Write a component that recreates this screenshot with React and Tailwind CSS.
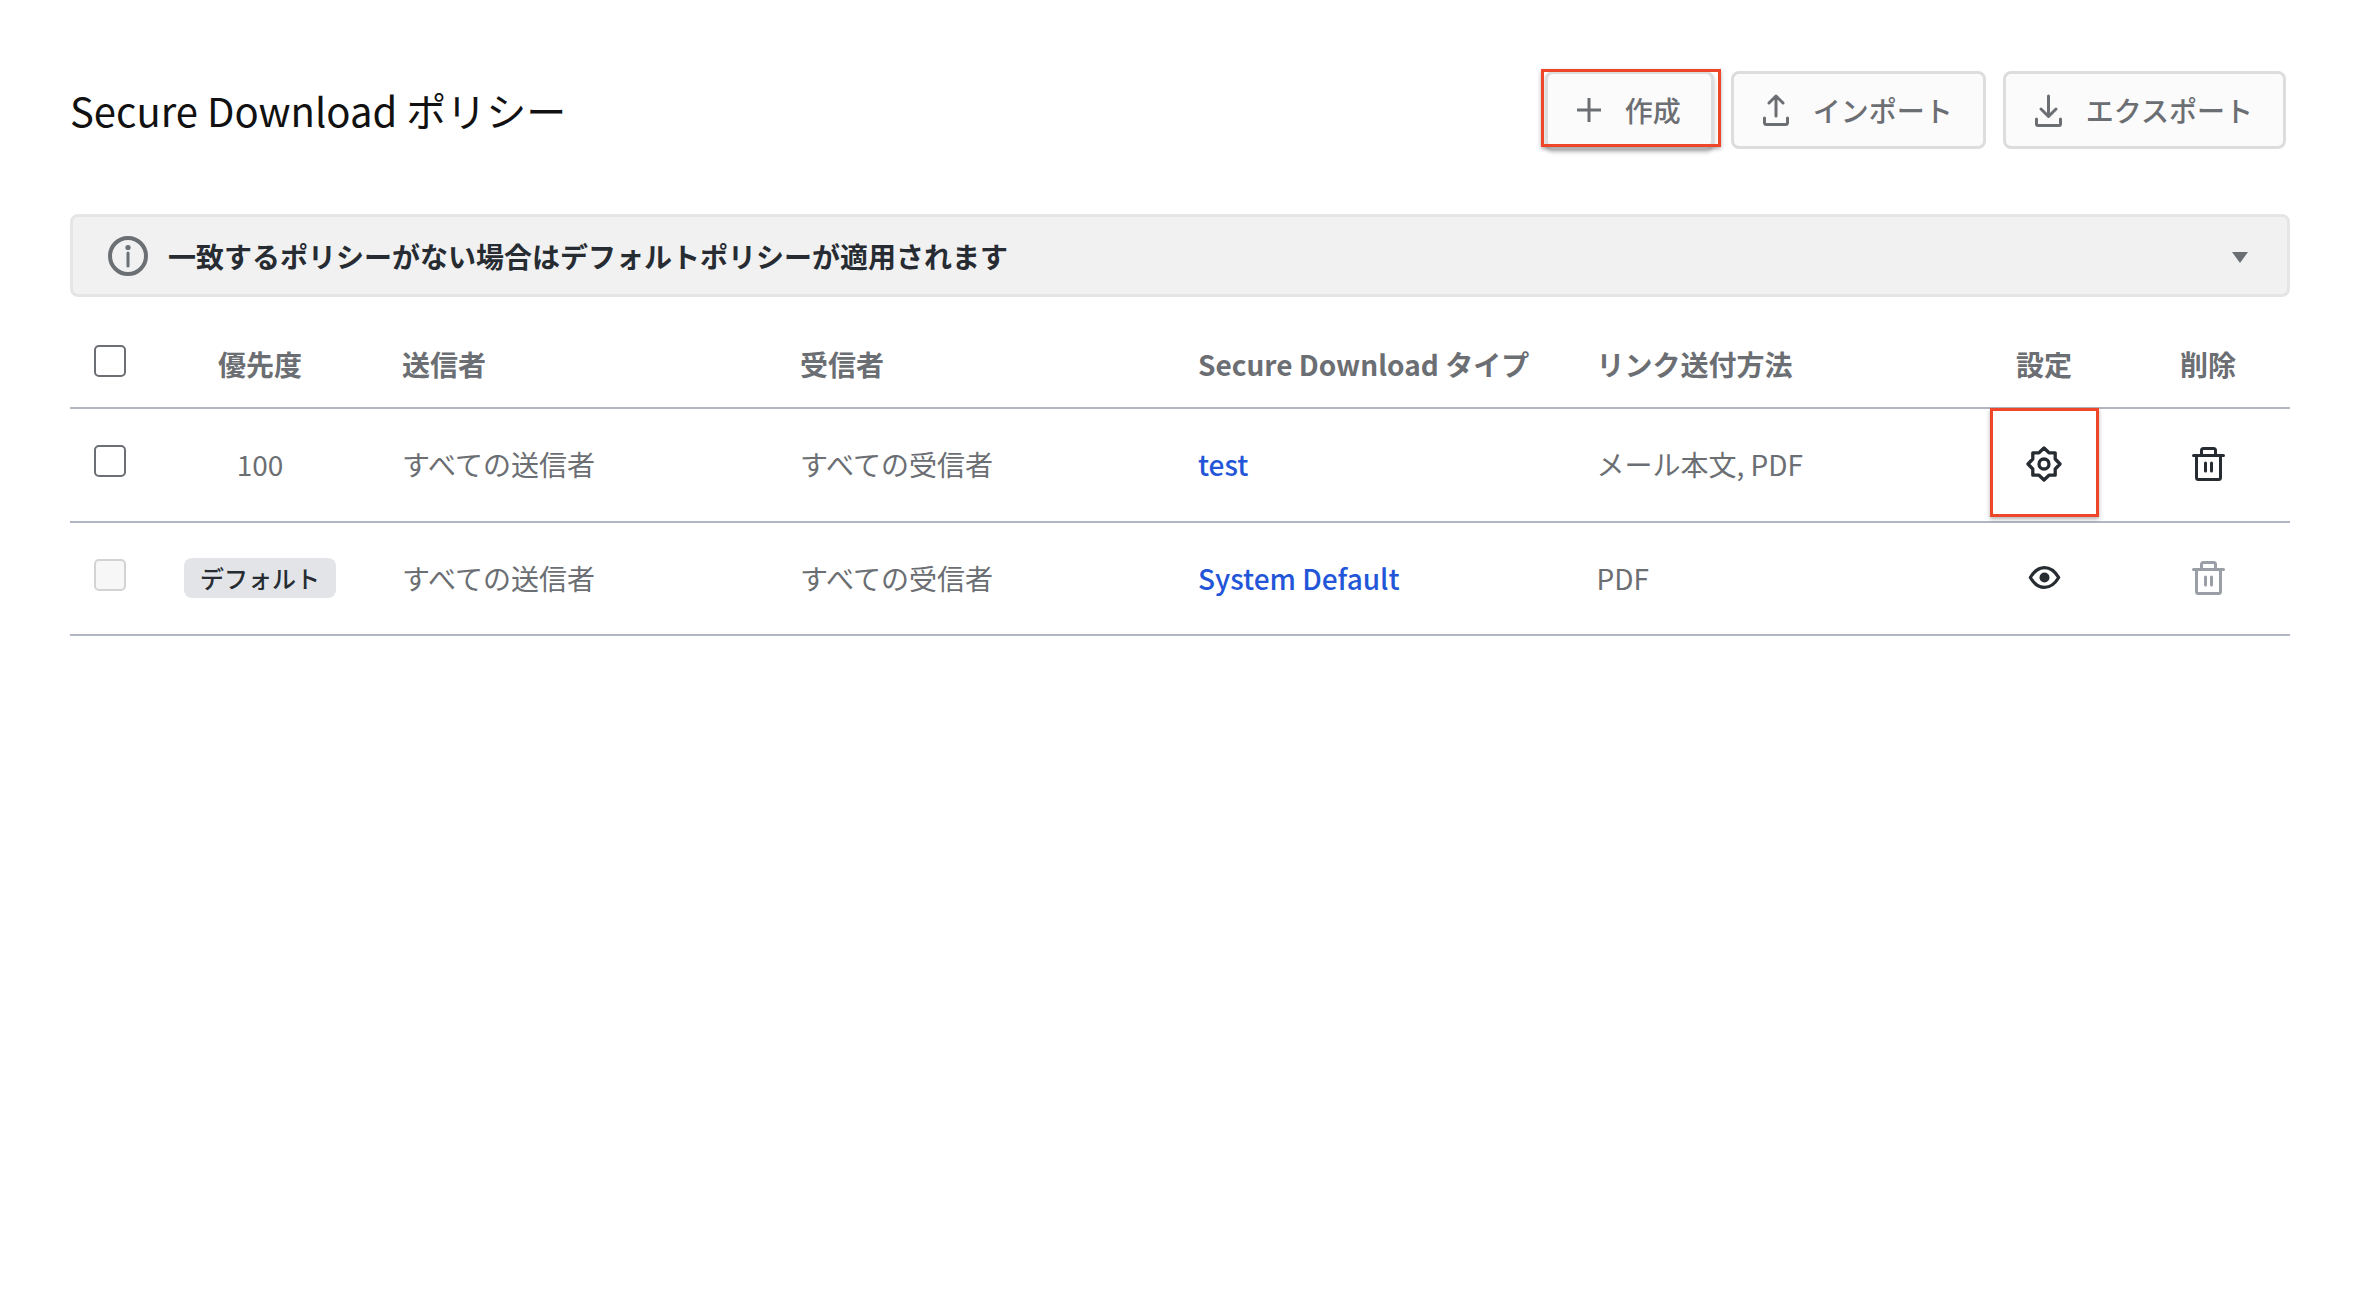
const ROW = "grid grid-cols-[79px_222px_429px_398px_398.500px_365.500px_164px_164px] items-center border-b-2 border-[#b2b6c2]";
const FONT = { fontFamily: '"Noto Sans CJK JP", sans-serif' };

function PlusIcon() {
  return (
    <svg width="24" height="24" viewBox="0 0 24 24" fill="none" stroke="currentColor" strokeWidth="3">
      <path d="M12 0V24M0 12H24" />
    </svg>
  );
}

function UploadIcon() {
  return (
    <svg width="26" height="32" viewBox="0 0 26 32" fill="none" stroke="currentColor" strokeWidth="3" strokeLinecap="round" strokeLinejoin="round">
      <path d="M13 22V2M6 9l7-7 7 7" />
      <path d="M1.500 24v4.500a2 2 0 0 0 2 2h19a2 2 0 0 0 2-2V24" />
    </svg>
  );
}

function DownloadIcon() {
  return (
    <svg width="27" height="33" viewBox="0 0 27 33" fill="none" stroke="currentColor" strokeWidth="3" strokeLinecap="round" strokeLinejoin="round">
      <path d="M13.500 2v20M6 15l7.500 7.500L21 15" />
      <path d="M1.500 25v5a1.500 1.500 0 0 0 1.500 1.500h21a1.500 1.500 0 0 0 1.500-1.500v-5" />
    </svg>
  );
}

function InfoIcon() {
  return (
    <svg width="40" height="40" viewBox="0 0 40 40" fill="none" stroke="#6b7075" strokeWidth="4">
      <circle cx="20" cy="20" r="18" />
      <circle cx="20" cy="11.500" r="2.600" fill="#6b7075" stroke="none" />
      <path d="M20 17v13" strokeWidth="3" strokeLinecap="round" />
    </svg>
  );
}

function GearIcon() {
  return (
    <svg width="36" height="36" viewBox="0 0 36 36" fill="none" stroke="#272c33" strokeWidth="3.300" strokeLinejoin="round">
      <path d="M18 2l5 4.800h6.200v6.200l4.800 5-4.800 5v6.200h-6.200l-5 4.800-5-4.800h-6.200v-6.200l-4.800-5 4.800-5v-6.200h6.200z" />
      <circle cx="18" cy="18" r="5" />
    </svg>
  );
}

function EyeIcon() {
  return (
    <svg className="mb-px" width="33" height="23" viewBox="0 0 32 23" fill="none" stroke="#272c33" strokeWidth="3.200">
      <path d="M1.800 11.500C6 4.500 11 1.600 16 1.600s10 2.900 14.200 9.900C26 18.500 21 21.400 16 21.400S6 18.500 1.800 11.500z" strokeLinejoin="round" />
      <circle cx="16" cy="11.500" r="5" fill="#272c33" stroke="none" />
    </svg>
  );
}

function TrashIcon({ color }) {
  return (
    <svg width="33" height="34" viewBox="0 0 33 34" fill="none" stroke={color} strokeWidth="3" strokeLinecap="round" strokeLinejoin="round">
      <path d="M1.500 8.500h30" />
      <path d="M9.500 8.500V3.500a2 2 0 0 1 2-2h10a2 2 0 0 1 2 2v5" />
      <path d="M4.500 8.500v22a2 2 0 0 0 2 2h20a2 2 0 0 0 2-2v-22" />
      <path d="M13.500 16v8M19.500 16v8" />
    </svg>
  );
}

function Checkbox({ disabled }) {
  return (
    <div
      className={
        "ml-6 mb-[6px] h-8 w-8 rounded-[5px] border-[2.500px] " +
        (disabled ? "border-[#d3d3d3] bg-[#f7f7f7]" : "border-[#6b6e72] bg-white")
      }
    />
  );
}

function HeaderButton({ icon, label, highlighted }) {
  return (
    <div className="relative">
      <button className={"flex h-[78px] items-center gap-6 rounded-lg border-[3px] border-[#dddddd] bg-[#fbfbfb] pl-[29px] pr-[30px] text-[28px] font-medium text-[#6b6e72]" + (highlighted ? " shadow-[0_3px_4px_rgba(0,0,0,0.25)]" : "")}>
        {icon}
        <span>{label}</span>
      </button>
      {highlighted && <div className="absolute -left-1 -right-[7px] -top-[2px] bottom-[2px] border-[3px] border-[#ee4628] shadow-[0_2px_4px_rgba(0,0,0,0.3)]" />}
    </div>
  );
}

function PolicyRow({ priority, type, method, isDefault }) {
  return (
    <div className={ROW + " h-[113.700px] pb-px text-[28px] text-[#6b6e72]"}>
      <Checkbox disabled={isDefault} />
      <div className="flex justify-center">
        {isDefault ? (
          <span className="flex h-10 w-[152px] items-center justify-center rounded-lg bg-[#e2e4e8] text-[24px] font-medium text-[#272c33]">デフォルト</span>
        ) : (
          priority
        )}
      </div>
      <div className="pl-[31px]">すべての送信者</div>
      <div>すべての受信者</div>
      <div className="font-medium text-[#2255d8]">{type}</div>
      <div>{method}</div>
      <div className="relative flex h-full items-center justify-center">
        {isDefault ? <EyeIcon /> : <GearIcon />}
        {!isDefault && <div className="absolute -top-px bottom-[3px] left-[28px] right-[27px] border-[3px] border-[#ee4628] shadow-[0_2px_4px_rgba(0,0,0,0.3)]" />}
      </div>
      <div className="flex justify-center">
        <TrashIcon color={isDefault ? "#9a9ea6" : "#272c33"} />
      </div>
    </div>
  );
}

export default function App() {
  return (
    <div className="min-h-screen bg-white px-[70px] pt-[71px]" style={FONT}>
      <div className="flex items-center justify-between pr-1">
        <h1 className="text-[40px] leading-none font-normal text-[#111111]">Secure Download ポリシー</h1>
        <div className="flex gap-[17px]">
          <HeaderButton icon={<PlusIcon />} label="作成" highlighted />
          <HeaderButton icon={<UploadIcon />} label="インポート" />
          <HeaderButton icon={<DownloadIcon />} label="エクスポート" />
        </div>
      </div>

      <div className="mt-[65px] flex h-[83px] items-center rounded-lg border-[3px] border-[#e5e5e5] bg-[#f1f1f1] pl-[35px] pr-[39px]">
        <InfoIcon />
        <span className="ml-5 flex-1 text-[28px] font-bold text-[#272c33]">一致するポリシーがない場合はデフォルトポリシーが適用されます</span>
        <div className="mt-1 h-0 w-0 border-x-[8px] border-t-[11px] border-x-transparent border-t-[#6b6e72]" />
      </div>

      <div className={ROW + " h-[112px] pt-6 text-[28px] font-bold text-[#6b6e72]"}>
        <Checkbox />
        <div className="text-center">優先度</div>
        <div className="pl-[31px]">送信者</div>
        <div>受信者</div>
        <div>Secure Download タイプ</div>
        <div>リンク送付方法</div>
        <div className="text-center">設定</div>
        <div className="text-center">削除</div>
      </div>
      <PolicyRow priority="100" type="test" method="メール本文, PDF" />
      <PolicyRow isDefault type="System Default" method="PDF" />
    </div>
  );
}
